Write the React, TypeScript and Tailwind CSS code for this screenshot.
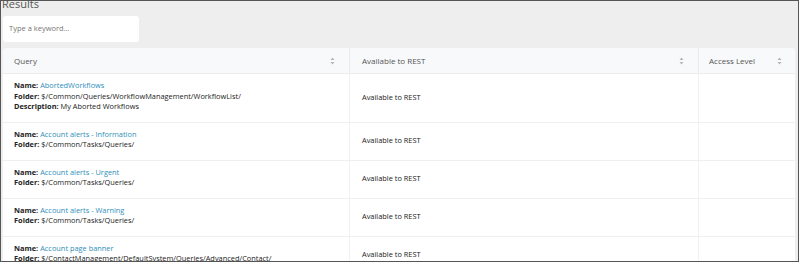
import React from "react";

const rows = [
  {
    name: "AbortedWorkflows",
    folder: "$/Common/Queries/WorkflowManagement/WorkflowList/",
    desc: "My Aborted Workflows",
  },
  { name: "Account alerts - Information", folder: "$/Common/Tasks/Queries/" },
  { name: "Account alerts - Urgent", folder: "$/Common/Tasks/Queries/" },
  { name: "Account alerts - Warning", folder: "$/Common/Tasks/Queries/" },
  {
    name: "Account page banner",
    folder: "$/ContactManagement/DefaultSystem/Queries/Advanced/Contact/",
  },
];

function SortIcon() {
  return (
    <svg width="5" height="8" viewBox="0 0 5 8" className="shrink-0">
      <path d="M2.5 0.5 L4.5 3 L0.5 3 Z" fill="#b5b5b5" />
      <path d="M2.5 7.5 L4.5 5 L0.5 5 Z" fill="#b5b5b5" />
    </svg>
  );
}

export default function App() {
  return (
    <div
      className="w-[799px] h-[262px] overflow-hidden border border-[#555] bg-[#eeeeee] text-[#333]"
      style={{ fontFamily: '"Open Sans", "Liberation Sans", sans-serif' }}
    >
      <div className="pl-[1px] pr-[3px]">
        <div className="text-[11px] leading-[14px] text-[#555] mt-[-4px] h-[14px]">
          Results
        </div>
        <div className="mt-[5px] ml-[1px] w-[136px] h-[26px] bg-white rounded-[3px] flex items-center pl-[6px] text-[7.5px] text-[#777]">
          Type a keyword...
        </div>
        <div className="mt-[6px] ml-[1px] w-[792px] bg-white rounded-t-[4px] overflow-hidden">
          <div className="grid grid-cols-[346px_349px_97px] h-[26px] bg-[#f8f9fb] border-b border-[#ececec] text-[8px] text-[#555]">
            <div className="flex items-center justify-between pl-[11px] pr-[14px]">
              <span>Query</span>
              <SortIcon />
            </div>
            <div className="flex items-center justify-between pl-[12px] pr-[14px] border-l border-[#ececec]">
              <span>Available to REST</span>
              <SortIcon />
            </div>
            <div className="flex items-center justify-between pl-[10px] pr-[13px] border-l border-[#ececec]">
              <span>Access Level</span>
              <SortIcon />
            </div>
          </div>
          {rows.map((r, i) => (
            <div
              key={i}
              className="grid grid-cols-[346px_349px_97px] border-b border-[#efefef] text-[7.4px] text-[#222]"
            >
              <div className="pl-[11px] pt-[6px] pb-[10px] leading-[10.5px]">
                <div>
                  <span className="font-bold">Name:</span>{" "}
                  <span className="text-[#2f8fba]">{r.name}</span>
                </div>
                <div>
                  <span className="font-bold">Folder:</span> {r.folder}
                </div>
                {r.desc && (
                  <div>
                    <span className="font-bold">Description:</span> {r.desc}
                  </div>
                )}
              </div>
              <div className="flex items-center pl-[12px] border-l border-[#f1f1f1]">
                Available to REST
              </div>
              <div className="border-l border-[#f1f1f1]" />
            </div>
          ))}
        </div>
      </div>
    </div>
  );
}
